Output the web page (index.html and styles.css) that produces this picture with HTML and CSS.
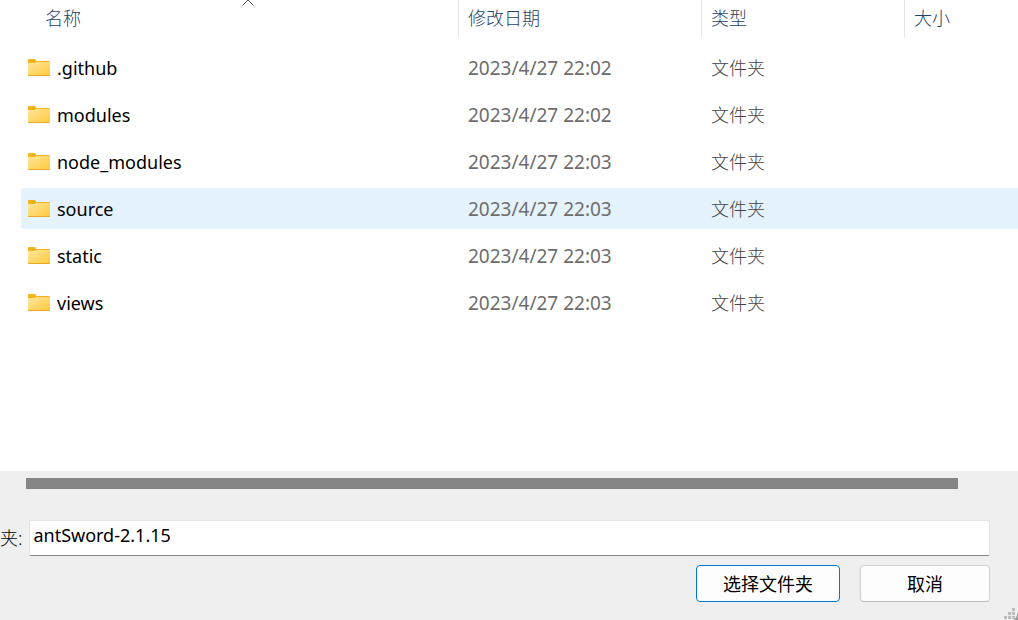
FILE: index.html
```html
<!DOCTYPE html>
<html lang="zh-CN">
<head>
  <meta charset="UTF-8">
  <title>选择文件夹</title>
  <link rel="stylesheet" href="styles.css">
</head>
<body>

  <svg class="defs" width="0" height="0" aria-hidden="true">
    <defs>
      <linearGradient id="folderFill" x1="0" y1="0" x2="1" y2="1">
        <stop offset="0" stop-color="#ffe7a0"/>
        <stop offset="1" stop-color="#ffc937"/>
      </linearGradient>
      <symbol id="folder" viewBox="0 0 22 18">
        <path d="M0 1Q0 0 1 0H7L8 1V2H21Q22 2 22 3V10H0Z" fill="#f5b41c"/>
        <path d="M0 4H7L8 3H22V16Q22 17 21 17H1Q0 17 0 16Z" fill="url(#folderFill)"/>
        <path d="M0 16H22Q22 17 21 17H1Q0 17 0 16Z" fill="#eba823"/>
      </symbol>
    </defs>
  </svg>

  <main class="list">
    <table class="files">
      <colgroup>
        <col class="col-name">
        <col class="col-date">
        <col class="col-type">
        <col class="col-size">
      </colgroup>
      <thead>
        <tr>
          <th aria-sort="ascending">
            <div class="head head-name">名称
              <svg class="sort" width="12" height="6" viewBox="0 0 12 6"><path d="M.5 5.500L6 0L11.500 5.500" fill="none" stroke="#555" stroke-width="1"/></svg>
            </div>
          </th>
          <th><div class="head">修改日期</div></th>
          <th><div class="head">类型</div></th>
          <th><div class="head">大小</div></th>
        </tr>
      </thead>
      <tbody>
        <tr>
          <td><div class="name"><svg class="icon"><use href="#folder"/></svg>.github</div></td>
          <td>2023/4/27 22:02</td>
          <td>文件夹</td>
          <td></td>
        </tr>
        <tr>
          <td><div class="name"><svg class="icon"><use href="#folder"/></svg>modules</div></td>
          <td>2023/4/27 22:02</td>
          <td>文件夹</td>
          <td></td>
        </tr>
        <tr>
          <td><div class="name"><svg class="icon"><use href="#folder"/></svg>node_modules</div></td>
          <td>2023/4/27 22:03</td>
          <td>文件夹</td>
          <td></td>
        </tr>
        <tr class="active">
          <td><div class="name"><svg class="icon"><use href="#folder"/></svg>source</div></td>
          <td>2023/4/27 22:03</td>
          <td>文件夹</td>
          <td></td>
        </tr>
        <tr>
          <td><div class="name"><svg class="icon"><use href="#folder"/></svg>static</div></td>
          <td>2023/4/27 22:03</td>
          <td>文件夹</td>
          <td></td>
        </tr>
        <tr>
          <td><div class="name"><svg class="icon"><use href="#folder"/></svg>views</div></td>
          <td>2023/4/27 22:03</td>
          <td>文件夹</td>
          <td></td>
        </tr>
      </tbody>
    </table>
  </main>

  <footer class="footer">
    <div class="scrollbar"></div>
    <div class="field">
      <label for="folderName">夹:</label>
      <input type="text" id="folderName" value="antSword-2.1.15">
    </div>
    <div class="actions">
      <button type="button" class="primary">选择文件夹</button>
      <button type="button" class="cancel">取消</button>
    </div>
    <svg class="grip" width="14" height="12" viewBox="0 0 14 12" aria-hidden="true">
      <path d="M8 0h3v3h-3zM4 4h3v3h-3zM8 4h3v3h-3zM0 8h3v3h-3zM4 8h3v3h-3zM8 8h3v3h-3z" fill="#bdbdbd"/>
      <path d="M14 4V12H10Q13 9 14 4Z" fill="#999"/>
    </svg>
  </footer>

</body>
</html>
```

FILE: styles.css
```css
* {
  box-sizing: border-box;
}
body {
  margin: 0;
  min-height: 100vh;
  display: flex;
  flex-direction: column;
  background-color: #fff;
  color: #000;
  font-family: "Noto Sans", "Noto Sans CJK SC", sans-serif;
  font-size: 18px;
  line-height: 24px;
}
.defs {
  position: absolute;
}

/* file list */
.list {
  flex: 1;
  padding-left: 21px;
}
.files {
  width: 100%;
  table-layout: fixed;
  border-spacing: 0;
}
.col-name {
  width: 437px;
}
.col-date {
  width: 243px;
}
.col-type {
  width: 203px;
}
th {
  height: 44px;
  padding: 0;
  vertical-align: top;
  text-align: left;
  font-weight: 300;
  color: #1f4268;
}
.head {
  height: 38px;
  padding: 6px 9px;
  border-left: 1px solid #e5e5e5;
}
.head-name {
  position: relative;
  margin-left: 16px;
  padding-left: 8px;
  border-left: none;
}
.sort {
  position: absolute;
  top: 0;
  left: 50%;
  margin-left: -6px;
}
td {
  height: 47px;
  padding: 0 10px;
  border: solid transparent;
  border-width: 3px 0;
  background-clip: padding-box;
  color: #6d6d6d;
}
td:nth-child(2) {
  font-size: 19px;
}
td:nth-child(3) {
  font-weight: 300;
  color: #444;
}
td:first-child {
  padding-left: 7px;
  border-radius: 5px 0 0 5px;
  color: #000;
}
.active td {
  background-color: #e5f3ff;
}
.name {
  display: flex;
  align-items: center;
  gap: 7px;
}
.icon {
  width: 22px;
  height: 18px;
}

/* bottom panel */
.footer {
  position: relative;
  padding: 7px 28px 18px 0;
  background-color: #efefef;
}
.scrollbar {
  height: 11px;
  margin: 0 32px 31px 26px;
  background-color: #858585;
}
.field {
  display: flex;
  align-items: center;
  gap: 7px;
}
.field label {
  font-weight: 300;
}
.field input {
  flex: 1;
  min-width: 0;
  height: 36px;
  padding: 0 3px 6px;
  border: 1px solid #e5e5e5;
  border-bottom-color: #868686;
  border-radius: 2px;
  background-color: #fff;
  font: inherit;
}
.actions {
  display: flex;
  justify-content: flex-end;
  gap: 20px;
  margin-top: 9px;
}
button {
  height: 37px;
  padding: 0;
  border: 1px solid #d0d0d0;
  border-bottom-color: #bbb;
  border-radius: 4px;
  background-color: #fdfdfd;
  color: #000;
  font: inherit;
}
.primary {
  width: 144px;
  border-color: #0078d4;
}
.cancel {
  width: 130px;
}
.grip {
  position: absolute;
  right: 0;
  bottom: 0;
}
```
